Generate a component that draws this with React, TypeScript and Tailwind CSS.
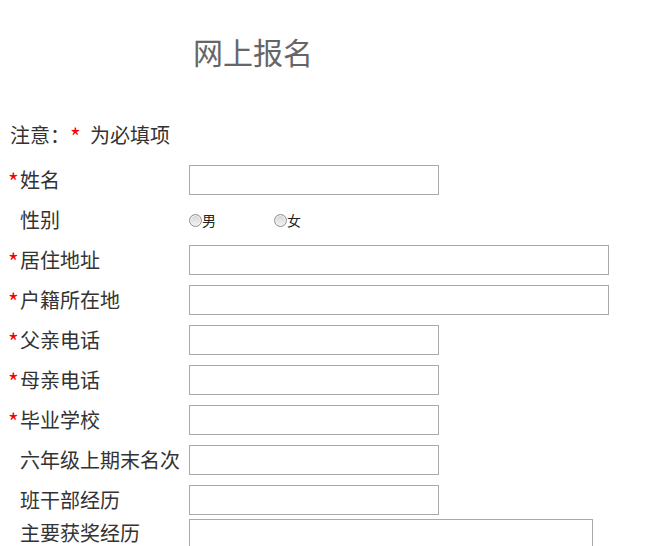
import React from "react";

const font = { fontFamily: '"Noto Sans CJK SC", "Noto Sans", sans-serif' };

function Label({ text, required }: { text: string; required?: boolean }) {
  return (
    <div className="w-[189px] shrink-0 pl-[8px] text-[20px] leading-[30px] text-[#333] whitespace-nowrap">
      <span className="relative top-[3px] inline-block w-[12px] text-[23px] leading-[20px] text-[#ff0000]">{required ? "*" : ""}</span>
      {text}
    </div>
  );
}

function Radio({ label }: { label: string }) {
  return (
    <label className="inline-flex w-[85px] items-center text-[14px] text-[#222]">
      <span className="inline-block h-[13px] w-[13px] rounded-full border border-[#8f8f8f] bg-gradient-to-b from-[#d4d4d4] to-[#f4f4f4] shadow-[inset_0_0_0_1px_#f0f0f0]" />
      <span className="leading-[14px]">{label}</span>
    </label>
  );
}

function Row({ label, required, wide }: { label: string; required?: boolean; wide?: boolean }) {
  return (
    <div className="flex h-[30px] items-center mb-[10px]">
      <Label text={label} required={required} />
      <input
        type="text"
        className={`h-[30px] border border-[#a9a9a9] bg-white outline-none ${wide ? "w-[420px]" : "w-[250px]"}`}
      />
    </div>
  );
}

export default function App() {
  return (
    <div className="h-[546px] w-[671px] overflow-hidden bg-white" style={font}>
      <div className="pt-[36px] pl-[193px] text-[30px] leading-[30px] text-[#666]">网上报名</div>
      <div className="mt-[54px] pl-[10px] text-[20px] leading-[30px] text-[#333] whitespace-nowrap">
        注意：<span className="relative top-[3px] inline-block w-[20px] text-[23px] leading-[20px] text-[#ff0000]">*</span>为必填项
      </div>
      <div className="mt-[15px]">
        <Row label="姓名" required />
        <div className="flex h-[30px] items-center mb-[10px]">
          <Label text="性别" />
          <Radio label="男" />
          <Radio label="女" />
        </div>
        <Row label="居住地址" required wide />
        <Row label="户籍所在地" required wide />
        <Row label="父亲电话" required />
        <Row label="母亲电话" required />
        <Row label="毕业学校" required />
        <Row label="六年级上期末名次" />
        <div className="flex h-[30px] items-center mb-[4px]">
          <Label text="班干部经历" />
          <input type="text" className="h-[30px] w-[250px] border border-[#a9a9a9] bg-white outline-none" />
        </div>
        <div className="flex items-start">
          <div className="w-[189px] shrink-0 pl-[20px] text-[20px] leading-[28px] text-[#333] whitespace-nowrap">
            主要获奖经历
          </div>
          <textarea className="h-[100px] w-[404px] resize-none border border-[#a9a9a9] bg-white outline-none" />
        </div>
      </div>
    </div>
  );
}
